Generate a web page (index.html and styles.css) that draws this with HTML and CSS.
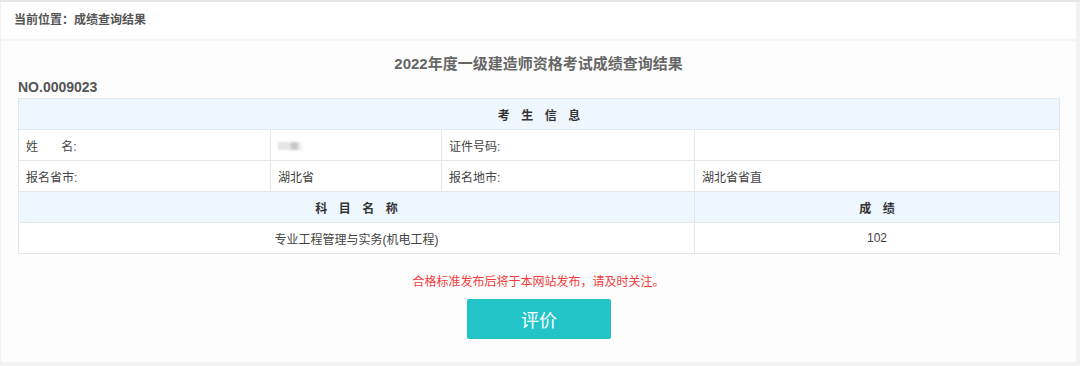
FILE: index.html
```html
<!DOCTYPE html>
<html lang="zh-CN">
<head>
<meta charset="utf-8">
<title>成绩查询结果</title>
<link rel="stylesheet" href="styles.css">
</head>
<body>
<div class="topline"></div>
<div class="panel">
  <div class="crumb">当前位置：成绩查询结果</div>
  <div class="content">
    <h1 class="title">2022年度一级建造师资格考试成绩查询结果</h1>
    <div class="no">NO.0009023</div>
    <table class="grid">
      <colgroup>
        <col class="c1"><col class="c2"><col class="c3"><col class="c4">
      </colgroup>
      <tr class="head"><td colspan="4"><span class="sp">考生信息</span></td></tr>
      <tr>
        <td class="lbl">姓&nbsp;&nbsp;&nbsp;&nbsp;&nbsp;&nbsp;&nbsp;名:</td>
        <td class="lbl"><span class="blur"></span></td>
        <td class="lbl">证件号码:</td>
        <td class="lbl"></td>
      </tr>
      <tr>
        <td class="lbl">报名省市:</td>
        <td class="lbl">湖北省</td>
        <td class="lbl">报名地市:</td>
        <td class="lbl">湖北省省直</td>
      </tr>
      <tr class="head">
        <td colspan="3"><span class="sp">科目名称</span></td>
        <td><span class="sp">成绩</span></td>
      </tr>
      <tr class="center">
        <td colspan="3">专业工程管理与实务(机电工程)</td>
        <td>102</td>
      </tr>
    </table>
    <p class="notice">合格标准发布后将于本网站发布，请及时关注。</p>
    <div class="actions"><button class="btn" type="button">评价</button></div>
  </div>
</div>
</body>
</html>
```

FILE: styles.css
```css
html, body {
  margin: 0;
  padding: 0;
}
body {
  background: #f2f2f2;
  font-family: "Liberation Sans", "Noto Sans CJK SC", sans-serif;
  color: #444;
  width: 1080px;
  height: 366px;
  overflow: hidden;
}
.topline {
  height: 2px;
  background: #e4e7ea;
}
.panel {
  margin-left: 1px;
  width: 1075px;
  height: 360px;
  background: #fdfdfd;
}
.crumb {
  height: 37px;
  line-height: 37px;
  padding-left: 13px;
  font-size: 12px;
  font-weight: bold;
  color: #555;
  background: #fff;
  border-bottom: 2px solid #f4f5f6;
}
.content {
  padding: 0 17px 0 17px;
}
.title {
  margin: 11px 0 0 0;
  height: 24px;
  line-height: 24px;
  text-align: center;
  font-size: 15px;
  font-weight: bold;
  color: #666;
}
.no {
  height: 22px;
  line-height: 22px;
  font-size: 14px;
  font-weight: bold;
  color: #555;
}
.grid {
  width: 1041px;
  border-collapse: collapse;
  table-layout: fixed;
  font-size: 12px;
  color: #444;
  background: #fff;
}
.c1 { width: 252px; }
.c2 { width: 171px; }
.c3 { width: 253px; }
.c4 { width: 365px; }
.grid td {
  height: 30px;
  padding: 0 7px;
  border: 1px solid #e3e8ee;
}
.grid .head td {
  background: #eef6fe;
  text-align: center;
  font-weight: bold;
  color: #333;
}
.sp {
  letter-spacing: 11.5px;
  margin-right: -11.5px;
}
.grid .center td {
  text-align: center;
}
.blur {
  display: inline-block;
  width: 24px;
  height: 8px;
  vertical-align: middle;
  background: linear-gradient(90deg, #e4e4e4 0 55%, #c9c9c9 55% 85%, #eeeeee 85%);
  filter: blur(1px);
}
.notice {
  margin: 19px 0 0 0;
  height: 18px;
  line-height: 18px;
  text-align: center;
  font-size: 12px;
  color: #f23a3a;
}
.actions {
  margin-top: 8px;
  text-align: center;
}
.btn {
  width: 144px;
  height: 40px;
  border: 0;
  border-radius: 2px;
  background: #22c4c8;
  color: #fff;
  font-family: "Liberation Sans", "Noto Sans CJK SC", sans-serif;
  font-size: 18px;
  padding: 0;
  margin-left: 1px;
}
```
